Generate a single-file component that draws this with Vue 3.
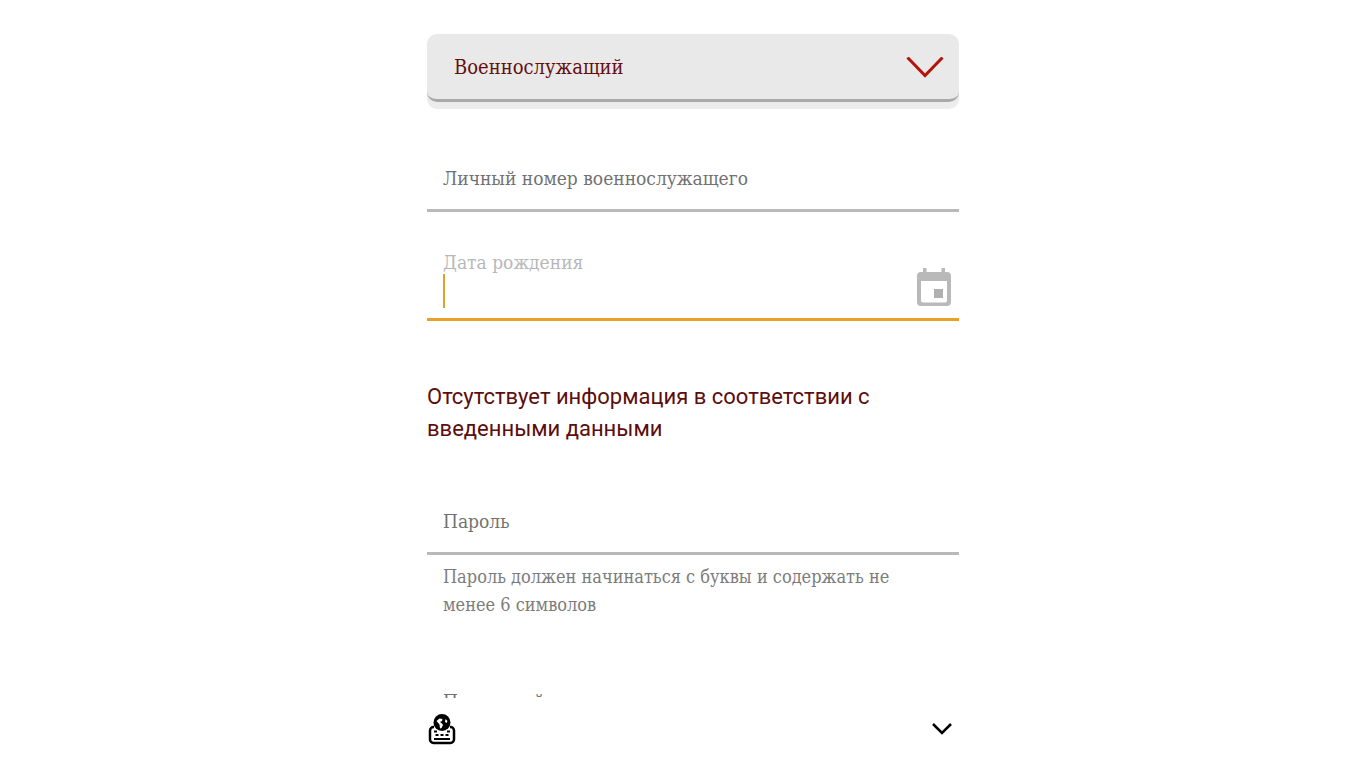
<script setup>
import { ref } from "vue";

const role = ref("military");
const personalNumber = ref("");
const birthDate = ref("");
const password = ref("");
const passwordRepeat = ref("");
const error = ref("Отсутствует информация в соответствии с введенными данными");
</script>

<template>
  <div class="screen">
    <form class="form" @submit.prevent>
      <div class="content">
        <div class="role">
          <select v-model="role" class="role-select" aria-label="Военнослужащий">
            <option value="military">Военнослужащий</option>
          </select>
          <svg class="role-arrow" viewBox="0 0 38 22" fill="none" stroke="#b3140c" stroke-width="3">
            <path d="M1.5 .5 L19 18.500 L36.500 .5" />
          </svg>
        </div>

        <div class="field number">
          <label for="number">Личный номер военнослужащего</label>
          <input id="number" v-model="personalNumber" type="text" />
        </div>

        <div class="date active">
          <label for="birth">Дата рождения</label>
          <div class="entry">
            <span class="caret"></span>
            <input id="birth" v-model="birthDate" type="text" />
          </div>
          <button type="button" class="calendar" aria-label="Дата рождения">
            <svg viewBox="0 0 34 38">
              <path
                fill="#b9b9b9"
                fill-rule="evenodd"
                d="M6 0h3.500v4h15V0H28v4h2a4 4 0 0 1 4 4v26a4 4 0 0 1-4 4H4a4 4 0 0 1-4-4V8a4 4 0 0 1 4-4h2zM4 13v19.500a2 2 0 0 0 2 2h22a2 2 0 0 0 2-2V13z"
              />
              <rect x="17" y="21" width="9" height="9" fill="#b0b0b0" />
            </svg>
          </button>
        </div>

        <p class="error">{{ error }}</p>

        <div class="field">
          <label for="password">Пароль</label>
          <input id="password" v-model="password" type="password" />
        </div>
        <p class="hint">Пароль должен начинаться с буквы и содержать не менее 6 символов</p>

        <div class="field repeat">
          <label for="repeat">Повторный пароль</label>
          <input id="repeat" v-model="passwordRepeat" type="password" />
        </div>
      </div>
    </form>

    <div class="keyboard">
      <div class="keyboard-bar">
        <button type="button" aria-label="Язык клавиатуры">
          <svg width="28" height="32" viewBox="0 0 28 32">
            <path
              d="M6 14H5.500a3.500 3.500 0 0 0-3.500 3.500v9A3.500 3.500 0 0 0 5.500 30h17a3.500 3.500 0 0 0 3.500-3.500v-9A3.500 3.500 0 0 0 22.500 14H22"
              fill="none"
              stroke="#000"
              stroke-width="2.500"
            />
            <circle cx="14" cy="9.500" r="8.500" fill="#000" />
            <path d="M8.500 8l3-2.500 3 .5-.5 2-2 1 2 1.500 1 1.500-1.500 3-1.500.5-.5-4zM17.500 6l2 2-1 2-1.500-1z" fill="#fff" />
            <path d="M6 18.500h3M19 18.500h3M7.500 22h3M12.500 22h3M17.500 22h3M6 26h16" stroke="#000" stroke-width="2" />
          </svg>
        </button>
        <button type="button" aria-label="Скрыть клавиатуру">
          <svg width="20" height="12" viewBox="0 0 20 12" fill="none" stroke="#000" stroke-width="2.500">
            <path d="M1 1l9 9 9-9" />
          </svg>
        </button>
      </div>
    </div>
  </div>
</template>

<style>
body {
  background: #fff;
}
</style>

<style scoped>
.screen {
  display: flex;
  flex-direction: column;
  height: 100vh;
  font-family: "DejaVu Serif Condensed", "DejaVu Serif", serif;
}

.form,
.keyboard {
  display: grid;
  grid-template-columns: 427fr 532fr 401fr;
}

.form {
  flex: 1;
  min-height: 0;
  overflow-y: auto;
  scrollbar-width: none;
}

.content {
  grid-column: 2;
  padding-top: 34px;
}

input,
select,
button {
  box-sizing: border-box;
  border: none;
  outline: none;
  background: none;
  font-family: inherit;
}

label {
  color: #727272;
  font-size: 19px;
  line-height: 28px;
}

.role {
  display: grid;
  align-items: center;
}

.role-select {
  grid-area: 1 / 1;
  width: 100%;
  height: 68px;
  padding: 0 28px 0 27px;
  border-bottom: 3px solid #a9a9a9;
  border-radius: 10px;
  background: #e9e9e9;
  box-shadow: 0 7px 0 #ececec;
  color: #65100d;
  font-size: 20px;
  appearance: none;
}

.role-arrow {
  grid-area: 1 / 1;
  justify-self: end;
  width: 38px;
  height: 22px;
  margin-right: 15px;
  pointer-events: none;
}

.field {
  display: grid;
  border-bottom: 3px solid #b9b9b9;
}

.field label {
  grid-area: 1 / 1;
  align-self: start;
  padding: 16px 16px 0;
}

.field input {
  grid-area: 1 / 1;
  width: 100%;
  height: 61px;
  padding: 16px;
  font-size: 19px;
}

.number {
  margin-top: 46px;
}

.date {
  display: grid;
  grid-template-columns: 1fr auto;
  margin-top: 36px;
  padding: 0 8px 0 16px;
  border-bottom: 3px solid #b9b9b9;
}

.date label {
  color: #b8b8b8;
}

.active {
  border-bottom-color: #e9a227;
}

.entry {
  grid-row: 2;
  display: flex;
  height: 44px;
  margin-top: -2px;
}

.caret {
  width: 2px;
  height: 34px;
  background: #dda32c;
}

.entry input {
  flex: 1;
  min-width: 0;
  height: 34px;
  font-size: 19px;
}

.calendar {
  grid-row: 1 / 3;
  grid-column: 2;
  align-self: end;
  width: 34px;
  height: 38px;
  margin-bottom: 12px;
  padding: 0;
}

.calendar svg {
  display: block;
}

.error {
  margin: 60px 0 46px;
  color: #5c0d0c;
  font-family: Roboto, "Noto Sans", sans-serif;
  font-size: 22px;
  line-height: 32px;
}

.hint {
  margin: 8px 0 52px;
  padding: 0 16px;
  color: #7c7c7c;
  font-size: 18px;
  line-height: 28px;
}

.keyboard {
  height: 60px;
}

.keyboard-bar {
  grid-column: 2;
  display: flex;
  align-items: center;
  justify-content: space-between;
  padding: 2px 7px 0 1px;
}

.keyboard-bar button {
  padding: 0;
}

.keyboard-bar svg {
  display: block;
}
</style>
